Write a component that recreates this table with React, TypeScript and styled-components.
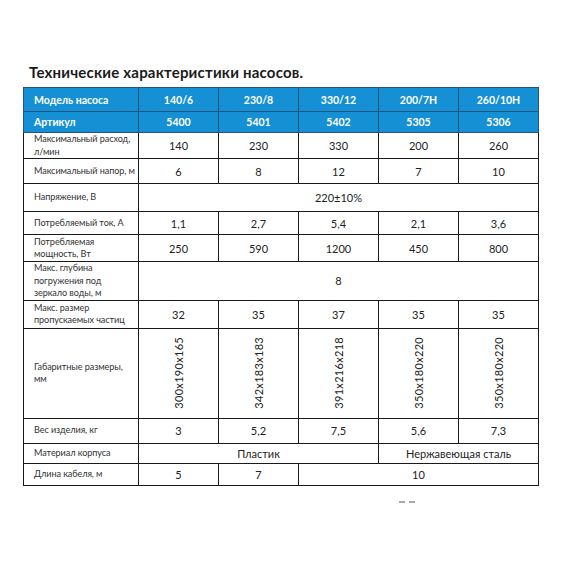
import { Fragment } from "react";
import styled, { createGlobalStyle } from "styled-components";

const GlobalStyle = createGlobalStyle`
  html, body {
    margin: 0;
    padding: 0;
    background: #fff;
  }
  body {
    font-family: "Lato", "Noto Sans", "DejaVu Sans", sans-serif;
  }
`;

const Page = styled.div`
  width: 570px;
  height: 570px;
  padding: 63px 0 0 23px;
  box-sizing: border-box;
  overflow: hidden;
`;

const Title = styled.h1`
  margin: 0 0 6px 6px;
  font-size: 15px;
  font-weight: 700;
  color: #1b1b1b;
  letter-spacing: 0.2px;
  line-height: 18px;
`;

const Table = styled.table`
  border-collapse: collapse;
  table-layout: fixed;
  width: 515px;
  color: #222;

  td {
    border: 1px solid #1a1a1a;
    padding: 0;
    text-align: center;
    font-size: 11px;
  }
`;

const HeadRow = styled.tr<{ $h: number }>`
  height: ${(p) => p.$h}px;
  background: #1590d4;

  td {
    color: #fff;
    font-weight: 700;
    font-size: 10.5px;
    border-color: #23557f;
  }
  td:first-child {
    text-align: left;
    padding-left: 10px;
  }
`;

const Row = styled.tr<{ $h: number }>`
  height: ${(p) => p.$h}px;
`;

const Label = styled.td`
  && {
    text-align: left;
    padding: 0 0 0 10px;
    font-size: 9.1px;
    letter-spacing: -0.08px;
    line-height: 12.5px;
    color: #333;
    white-space: nowrap;
  }
`;

const Vertical = styled.div`
  writing-mode: vertical-rl;
  transform: rotate(180deg);
  margin: 0 auto;
  font-size: 11px;
  letter-spacing: 0.3px;
`;

/* the page number below the table is cut off in the scan: only two short marks show */
const PageMark = styled.div`
  display: flex;
  gap: 4px;
  margin: 15px 0 0 376px;
`;

const Dash = styled.span`
  display: block;
  width: 6px;
  height: 2px;
  background: #a8a8a8;
`;

type Cell = { v: string; span?: number; vertical?: boolean };
type DataRow = { label: string[]; h: number; cells: Cell[] };

const models = ["140/6", "230/8", "330/12", "200/7H", "260/10H"];
const articles = ["5400", "5401", "5402", "5305", "5306"];

const c = (...vals: string[]): Cell[] => vals.map((v) => ({ v }));

const rows: DataRow[] = [
  { label: ["Максимальный расход,", "л/мин"], h: 26, cells: c("140", "230", "330", "200", "260") },
  { label: ["Максимальный напор, м"], h: 25, cells: c("6", "8", "12", "7", "10") },
  { label: ["Напряжение, В"], h: 28, cells: [{ v: "220±10%", span: 5 }] },
  { label: ["Потребляемый ток, А"], h: 23, cells: c("1,1", "2,7", "5,4", "2,1", "3,6") },
  { label: ["Потребляемая", "мощность, Вт"], h: 27, cells: c("250", "590", "1200", "450", "800") },
  {
    label: ["Макс. глубина", "погружения под", "зеркало воды, м"],
    h: 38,
    cells: [{ v: "8", span: 5 }],
  },
  { label: ["Макс. размер", "пропускаемых частиц"], h: 28, cells: c("32", "35", "37", "35", "35") },
  {
    label: ["Габаритные размеры,", "мм"],
    h: 90,
    cells: ["300x190x165", "342x183x183", "391x216x218", "350x180x220", "350x180x220"].map((v) => ({
      v,
      vertical: true,
    })),
  },
  { label: ["Вес изделия, кг"], h: 25, cells: c("3", "5,2", "7,5", "5,6", "7,3") },
  {
    label: ["Материал корпуса"],
    h: 20,
    cells: [
      { v: "Пластик", span: 3 },
      { v: "Нержавеющая сталь", span: 2 },
    ],
  },
  {
    label: ["Длина кабеля, м"],
    h: 22,
    cells: [{ v: "5" }, { v: "7" }, { v: "10", span: 3 }],
  },
];

const App = () => {
  return (
    <>
      <GlobalStyle />
      <Page>
        <Title>Технические характеристики насосов.</Title>
        <Table>
          <colgroup>
            <col style={{ width: 115 }} />
            {models.map((m) => (
              <col key={"col_" + m} style={{ width: 80 }} />
            ))}
          </colgroup>
          <tbody>
            <HeadRow $h={24}>
              <td>Модель насоса</td>
              {models.map((m) => (
                <td key={"m_" + m}>{m}</td>
              ))}
            </HeadRow>
            <HeadRow $h={21}>
              <td>Артикул</td>
              {articles.map((a) => (
                <td key={"a_" + a}>{a}</td>
              ))}
            </HeadRow>
            {rows.map((row, index) => (
              <Row $h={row.h} key={"row_" + index}>
                <Label>
                  {row.label.map((line, li) => (
                    <Fragment key={"l_" + li}>
                      {li > 0 && <br />}
                      {line}
                    </Fragment>
                  ))}
                </Label>
                {row.cells.map((cell, i) => (
                  <td key={"cell_" + index + "_" + i} colSpan={cell.span}>
                    {cell.vertical ? <Vertical>{cell.v}</Vertical> : cell.v}
                  </td>
                ))}
              </Row>
            ))}
          </tbody>
        </Table>
        <PageMark>
          <Dash />
          <Dash />
        </PageMark>
      </Page>
    </>
  );
};

export default App;
